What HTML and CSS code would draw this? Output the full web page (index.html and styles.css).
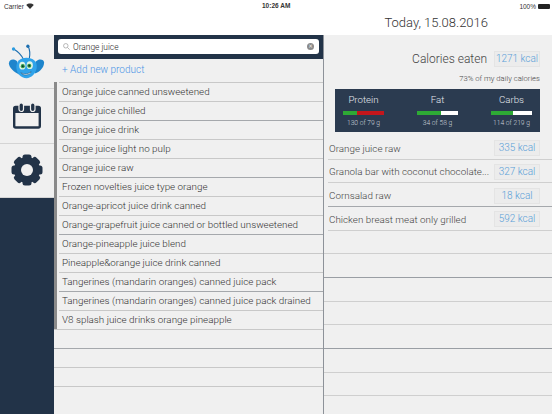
FILE: index.html
```html
<!DOCTYPE html>
<html lang="en">
<head>
  <meta charset="UTF-8">
  <meta name="viewport" content="width=device-width, initial-scale=1.0">
  <title>Today</title>
  <link rel="stylesheet" href="styles.css">
</head>
<body>
  <div class="status-bar">
    <div class="status-left">
      <span>Carrier</span>
      <svg class="wifi" viewBox="0 0 10 8" width="8" height="6"><path d="M5 8 0 2.6C2.8 0 7.200 0 10 2.600Z" fill="#333"/></svg>
    </div>
    <div class="status-time">10:26 AM</div>
    <div class="status-right">
      <span>100%</span>
      <div class="battery"></div>
    </div>
  </div>
  <header class="top-bar">Today, 15.08.2016</header>

  <div class="main">
    <nav class="sidebar">
      <div class="nav-item nav-logo">
        <svg viewBox="0 0 40 40" width="37" height="37">
          <path d="M17 18C15 14 12 10 7 7M23 17C24 12 24 8 22 4" stroke="#1d6fb0" stroke-width="1.200" fill="none"/>
          <circle cx="6" cy="6.500" r="1.800" fill="#2a9be0"/>
          <circle cx="21.500" cy="3.500" r="1.800" fill="#1d6fb0"/>
          <path d="M10 20C6 16 1 18 1 22C1 27 7 32 12 34Z" fill="#1e85cc"/>
          <path d="M30 20C34 16 39 18 39 21C39 26 35 31 29 33Z" fill="#1e85cc"/>
          <path d="M20 16C27 16 32 20 31 27C30 33 25 38 20 38C14 38 9 33 9 26C9 20 13 16 20 16Z" fill="#2fa3ea"/>
          <ellipse cx="15.500" cy="24.500" rx="3.400" ry="4.200" fill="#dff3e4"/>
          <ellipse cx="23.500" cy="24" rx="3.400" ry="4.200" fill="#dff3e4"/>
          <circle cx="16" cy="25" r="2.200" fill="#2e9a4a"/>
          <circle cx="23" cy="24.500" r="2.200" fill="#2e9a4a"/>
          <circle cx="16" cy="25" r="1" fill="#12302a"/>
          <circle cx="23" cy="24.500" r="1" fill="#12302a"/>
          <path d="M14 32C17 34 21 34 25 31C24 35 16 36 14 32Z" fill="#fff" stroke="#14466e" stroke-width=".5"/>
        </svg>
      </div>
      <div class="nav-item">
        <svg viewBox="0 0 28 27" width="28" height="27">
          <rect x="1.200" y="5" width="25.600" height="20.500" rx="1.500" fill="none" stroke="#223348" stroke-width="2.400"/>
          <rect x="1" y="5" width="26" height="6" fill="#223348"/>
          <rect x="6" y="1" width="4.500" height="8.500" rx="2.200" fill="#223348" stroke="#f0f0f0" stroke-width="1.200"/>
          <rect x="17.500" y="1" width="4.500" height="8.500" rx="2.200" fill="#223348" stroke="#f0f0f0" stroke-width="1.200"/>
        </svg>
      </div>
      <div class="nav-item">
        <svg viewBox="0 0 32 32" width="32" height="32">
          <g fill="#223348">
            <circle cx="16" cy="16" r="13"/>
            <rect x="11.500" y="0.500" width="9" height="31" rx="2.500"/>
            <rect x="11.500" y="0.500" width="9" height="31" rx="2.500" transform="rotate(45 16 16)"/>
            <rect x="11.500" y="0.500" width="9" height="31" rx="2.500" transform="rotate(90 16 16)"/>
            <rect x="11.500" y="0.500" width="9" height="31" rx="2.500" transform="rotate(135 16 16)"/>
          </g>
          <circle cx="16" cy="16" r="6" fill="#f0f0f0"/>
        </svg>
      </div>
      <div class="nav-rest"></div>
    </nav>

    <section class="products">
      <div class="search-band">
        <div class="search-box">
          <svg class="search-icon" viewBox="0 0 10 10" width="7" height="7"><circle cx="4" cy="4" r="3.200" fill="none" stroke="#999" stroke-width="1"/><path d="M6.500 6.500 9.500 9.500" stroke="#999" stroke-width="1"/></svg>
          <span class="search-text">Orange juice</span>
          <span class="search-clear">&times;</span>
        </div>
      </div>
      <div class="add-row">+ Add new product</div>
      <ul class="product-list">
        <li>Orange juice canned unsweetened</li>
        <li>Orange juice chilled</li>
        <li>Orange juice drink</li>
        <li>Orange juice light no pulp</li>
        <li>Orange juice raw</li>
        <li>Frozen novelties juice type orange</li>
        <li>Orange-apricot juice drink canned</li>
        <li>Orange-grapefruit juice canned or bottled unsweetened</li>
        <li>Orange-pineapple juice blend</li>
        <li>Pineapple&amp;orange juice drink canned</li>
        <li>Tangerines (mandarin oranges) canned juice pack</li>
        <li>Tangerines (mandarin oranges) canned juice pack drained</li>
        <li>V8 splash juice drinks orange pineapple</li>
      </ul>
      <div class="empty-rows">
        <div></div><div></div><div></div><div></div>
      </div>
    </section>

    <section class="summary">
      <div class="calories">
        <span class="calories-label">Calories eaten</span>
        <span class="kcal kcal-total">1271 kcal</span>
      </div>
      <div class="daily-note">73% of my daily calories</div>
      <div class="macros">
        <div class="macro">
          <div class="macro-name">Protein</div>
          <div class="bar"><div class="bar-fill" style="width:35%"></div><div class="bar-over"></div></div>
          <div class="macro-value">130 of 79 g</div>
        </div>
        <div class="macro">
          <div class="macro-name">Fat</div>
          <div class="bar"><div class="bar-fill" style="width:59%"></div></div>
          <div class="macro-value">34 of 58 g</div>
        </div>
        <div class="macro">
          <div class="macro-name">Carbs</div>
          <div class="bar"><div class="bar-fill" style="width:53%"></div></div>
          <div class="macro-value">114 of 219 g</div>
        </div>
      </div>
      <ul class="meals">
        <li><span class="meal-name">Orange juice raw</span><span class="kcal">335 kcal</span></li>
        <li><span class="meal-name">Granola bar with coconut chocolate...</span><span class="kcal">327 kcal</span></li>
        <li class="dark-line"><span class="meal-name">Cornsalad raw</span><span class="kcal">18 kcal</span></li>
        <li><span class="meal-name">Chicken breast meat only grilled</span><span class="kcal">592 kcal</span></li>
      </ul>
      <div class="summary-empty">
        <div></div><div class="dark-line"></div><div></div><div></div><div class="dark-line"></div><div></div><div></div>
      </div>
    </section>
  </div>
</body>
</html>
```

FILE: styles.css
```css
* {
  box-sizing: border-box;
}
body {
  margin: 0;
  width: 552px;
  height: 414px;
  overflow: hidden;
  font-family: Roboto, "Liberation Sans", sans-serif;
  font-weight: 300;
  background-color: #f0f0f0;
  color: #4a4a4a;
}
ul {
  list-style: none;
  margin: 0;
  padding: 0;
}

.status-bar {
  height: 12px;
  padding: 0 2px 0 4px;
  display: flex;
  justify-content: space-between;
  align-items: center;
  background-color: #fff;
  font-family: "Liberation Sans", sans-serif;
  font-size: 6.500px;
  font-weight: 400;
  color: #333;
  position: relative;
}
.status-left, .status-right {
  display: flex;
  align-items: center;
  gap: 2px;
}
.status-time {
  position: absolute;
  left: 262px;
  top: 2px;
  font-weight: 700;
  font-size: 6.500px;
}
.battery {
  width: 12px;
  height: 5px;
  background-color: #222;
  border-radius: 1px;
}

.top-bar {
  height: 23px;
  padding: 1px 64px 0 0;
  text-align: right;
  background-color: #fff;
  font-size: 13px;
  line-height: 20px;
  color: #333;
}

.main {
  display: flex;
  height: 379px;
}

.sidebar {
  width: 54px;
  display: flex;
  flex-direction: column;
}
.nav-item {
  height: 54.300px;
  display: flex;
  align-items: center;
  justify-content: center;
  border-bottom: 1px solid #d4d4d4;
}
.nav-logo {
  padding-right: 1px;
}
.nav-rest {
  flex: 1;
  background-color: #223348;
}

.products {
  width: 270px;
  border-right: 1px solid #8d9299;
  display: flex;
  flex-direction: column;
}
.search-band {
  height: 24px;
  padding: 4px;
  background-color: #223348;
}
.search-box {
  height: 15px;
  display: flex;
  align-items: center;
  padding: 0 5px;
  gap: 3px;
  background-color: #fff;
  border-radius: 3px;
  font-size: 8.400px;
  color: #222;
}
.search-text {
  flex: 1;
}
.search-clear {
  width: 7px;
  height: 7px;
  border-radius: 50%;
  background-color: #8a8a8a;
  color: #fff;
  font-size: 7px;
  line-height: 7px;
  text-align: center;
}
.add-row {
  height: 23px;
  padding-left: 8px;
  font-size: 10px;
  line-height: 22px;
  color: #4a94e6;
}
.product-list {
  border-left: 3px solid #8a8a8a;
}
.product-list li {
  height: 19px;
  margin-left: 2px;
  padding-left: 3px;
  border-top: 1px solid #c8c8c8;
  font-size: 9.850px;
  line-height: 18px;
  color: #333;
  white-space: nowrap;
}
.product-list li:nth-child(3n+3) {
  border-top-color: #a5a8ac;
}
.empty-rows div {
  height: 19px;
  border-top: 1px solid #c8c8c8;
}
.empty-rows div:nth-child(2) {
  border-top-color: #a5a8ac;
}

.summary {
  flex: 1;
  min-width: 0;
}
.calories {
  height: 32px;
  padding: 16px 12px 0 0;
  display: flex;
  justify-content: flex-end;
  align-items: center;
  gap: 7px;
}
.calories-label {
  font-size: 12px;
  color: #444;
}
.kcal {
  width: 46px;
  height: 16px;
  flex-shrink: 0;
  background-color: #ececec;
  border: 1px solid #e4e4e4;
  font-size: 10px;
  line-height: 14px;
  text-align: center;
  color: #5a9fd8;
}
.daily-note {
  height: 22px;
  padding: 6px 12px 0 0;
  text-align: right;
  font-size: 7.700px;
  line-height: 12px;
  color: #444;
}
.macros {
  height: 43px;
  margin: 0 12px 0 11px;
  display: flex;
  padding: 0 8px;
  justify-content: space-between;
  background-color: #2b3b50;
  color: #e4e8ee;
  text-align: center;
}
.macro {
  width: 41px;
}
.macro-name {
  margin-top: 4px;
  font-size: 9.700px;
  line-height: 14px;
}
.bar {
  margin-top: 4px;
  height: 4px;
  display: flex;
  background-color: #fff;
}
.bar-fill {
  background-color: #2eaa35;
}
.bar-over {
  flex: 1;
  background-color: #c3161c;
}
.macro-value {
  margin: 3px -8px 0;
  font-size: 6.700px;
  line-height: 10px;
  color: #d0d6de;
}
.meals {
  margin: 4px 0 0 4px;
}
.meals li {
  height: 23.670px;
  padding: 2px 12px 0 1px;
  display: flex;
  align-items: center;
  justify-content: space-between;
  border-bottom: 1px solid #cfcfcf;
}
.meals li.dark-line {
  border-bottom-color: #a5a8ac;
}
.meal-name {
  font-size: 9.850px;
  color: #444;
  white-space: nowrap;
}
.summary-empty div {
  height: 23.670px;
  border-bottom: 1px solid #cfcfcf;
}
.summary-empty div.dark-line {
  border-bottom-color: #9a9ea4;
}
```
